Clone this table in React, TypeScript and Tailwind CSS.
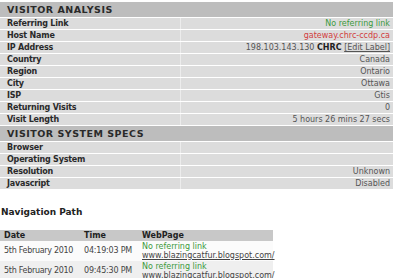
const analysis: [string, React.ReactNode][] = [
  ["Referring Link", <span className="text-[#3c9a3c]">No referring link</span>],
  ["Host Name", <span className="text-[#d23c3c]">gateway.chrc-ccdp.ca</span>],
  [
    "IP Address",
    <span>
      198.103.143.130 <b className="font-bold text-[#222]">CHRC</b> <span className="underline">[Edit Label]</span>
    </span>,
  ],
  ["Country", "Canada"],
  ["Region", "Ontario"],
  ["City", "Ottawa"],
  ["ISP", "Gtis"],
  ["Returning Visits", "0"],
  ["Visit Length", "5 hours 26 mins 27 secs"],
];

const specs: [string, React.ReactNode][] = [
  ["Browser", ""],
  ["Operating System", ""],
  ["Resolution", "Unknown"],
  ["Javascript", "Disabled"],
];

const visits = [
  { date: "5th February 2010", time: "04:19:03 PM", bg: "bg-[#fbfbfb]" },
  { date: "5th February 2010", time: "09:45:30 PM", bg: "bg-[#efefef]" },
];

function Header({ title }: { title: string }) {
  return (
    <div className="h-[15px] bg-[#bdbdbd] pl-[7px] text-[9.5px] font-bold leading-[15px] tracking-[0.5px] text-[#2a2a2a]">
      {title}
    </div>
  );
}

function Row({ label, value }: { label: string; value: React.ReactNode }) {
  return (
    <div className="grid h-[12px] grid-cols-[181px_1fr] border-t border-white text-[8px] leading-[11px]">
      <div className="border-r border-[#ececec] bg-[#dcdcdc] pl-[7px] font-bold tracking-[-0.2px] text-[#2a2a2a]">{label}</div>
      <div className="bg-[#dcdcdc] pr-[3px] text-right text-[#555]">{value}</div>
    </div>
  );
}

export default function App() {
  return (
    <div className="h-[278px] w-[400px] overflow-hidden bg-white font-['DejaVu_Sans',sans-serif]">
      <div className="w-[393px] pt-[2px]">
        <Header title="VISITOR ANALYSIS" />
        {analysis.map(([l, v]) => (
          <Row key={l} label={l} value={v} />
        ))}
        <div className="border-t border-white">
          <Header title="VISITOR SYSTEM SPECS" />
        </div>
        {specs.map(([l, v]) => (
          <Row key={l} label={l} value={v} />
        ))}
      </div>

      <div className="mt-[17px] pl-[1px] text-[9px] font-bold text-[#222]">Navigation Path</div>

      <div className="mt-[10px] w-[273px] text-[8px] text-[#444]">
        <div className="grid h-[11px] grid-cols-[80px_58px_1fr] bg-[#c8c8c8] pl-[4px] font-bold leading-[11px] text-[#222]">
          <div>Date</div>
          <div>Time</div>
          <div>WebPage</div>
        </div>
        {visits.map((v) => (
          <div key={v.time} className={`grid grid-cols-[80px_58px_1fr] items-center py-[1px] pl-[4px] leading-[9px] ${v.bg}`}>
            <div className="tracking-[-0.3px]">{v.date}</div>
            <div className="tracking-[-0.2px]">{v.time}</div>
            <div>
              <div className="text-[#3c9a3c]">No referring link</div>
              <div className="underline">www.blazingcatfur.blogspot.com/</div>
            </div>
          </div>
        ))}
      </div>
    </div>
  );
}
